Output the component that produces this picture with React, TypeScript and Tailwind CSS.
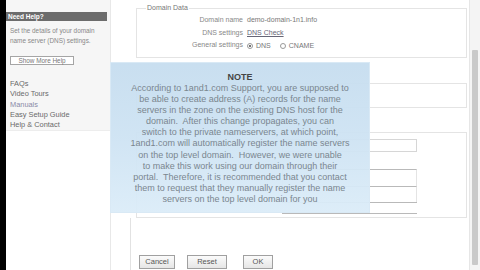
import React from 'react'

const noteLines = [
  'According to 1and1.com Support, you are supposed to',
  'be able to create address (A) records for the name',
  'servers in the zone on the existing DNS host for the',
  'domain.  After this change propagates, you can',
  'switch to the private nameservers, at which point,',
  '1and1.com will automatically register the name servers',
  'on the top level domain.  However, we were unable',
  'to make this work using our domain through their',
  'portal.  Therefore, it is recommended that you contact',
  'them to request that they manually register the name',
  'servers on the top level domain for you',
]

const helpLinks = ['FAQs', 'Video Tours', 'Manuals', 'Easy Setup Guide', 'Help & Contact']

const Box: React.FC<{ legend?: string; className?: string; children?: React.ReactNode }> = ({
  legend,
  className = '',
  children,
}) => (
  <div className={`relative ml-[25px] mr-[2px] border border-[#e4e4e4] ${className}`}>
    {legend && (
      <span className="absolute -top-[6px] left-[9px] bg-white px-[1px] text-[7px] leading-[10px] text-[#777]">
        {legend}
      </span>
    )}
    {children}
  </div>
)

const Row: React.FC<{ label: string; children: React.ReactNode }> = ({ label, children }) => (
  <div className="flex items-center h-[12.5px]">
    <span className="w-[109px] pr-[3px] text-right text-[7px] text-[#888]">{label}</span>
    <span className="pl-[1px] text-[7px] text-[#777]">{children}</span>
  </div>
)

const Radio: React.FC<{ checked?: boolean; label: string }> = ({ checked, label }) => (
  <span className="inline-flex items-center gap-[3px] mr-[9px]">
    <span className="w-[6px] h-[6px] rounded-full border border-[#999] bg-white flex items-center justify-center">
      {checked && <span className="w-[2px] h-[2px] rounded-full bg-[#444]" />}
    </span>
    {label}
  </span>
)

const Btn: React.FC<{ label: string; w: string }> = ({ label, w }) => (
  <button
    className={`${w} h-[14px] border border-[#a0a0a0] bg-gradient-to-b from-[#fbfbfb] to-[#e6e6e6] text-[7.5px] text-[#555]`}
  >
    {label}
  </button>
)

export default function App() {
  return (
    <div className="relative w-[480px] h-[270px] overflow-hidden bg-white flex font-['Liberation_Sans',Arial,sans-serif]">
      {/* left edge */}
      <div className="w-[6px] shrink-0 bg-black" />

      {/* help sidebar */}
      <aside className="w-[104px] shrink-0 flex flex-col">
        <div className="bg-[#f6f6f6] pt-[12px] h-[131px] border-b border-[#ededed]">
          <div className="mr-[3px] h-[9px] bg-[#6c6c6c] pl-[2px] text-[6.5px] font-bold leading-[9px] text-white">
            Need Help?
          </div>
          <p className="mt-[5px] pl-[4px] text-[6.4px] leading-[10px] text-[#888]">
            Set the details of your domain
            <br />
            name server (DNS) settings.
          </p>
          <button className="ml-[4px] mt-[7px] w-[64px] h-[9px] border border-[#a5a5a5] bg-white text-[6.4px] leading-[7px] text-[#777]">
            Show More Help
          </button>
          <ul className="mt-[9px] pl-[4px]">
            {helpLinks.map(l => (
              <li
                key={l}
                className={`text-[7.4px] leading-[10.3px] ${l === 'Manuals' ? 'text-[#8a8aa6]' : 'text-[#6a6a6a]'}`}
              >
                {l}
              </li>
            ))}
          </ul>
        </div>
        <div className="flex-1 bg-white" />
      </aside>

      {/* main form */}
      <main className="flex-1 flex flex-col border-l border-[#e8e8e8] pt-[8px]">
        <Box legend="Domain Data" className="h-[50px] pt-[5px]">
          <Row label="Domain name">demo-domain-1n1.info</Row>
          <Row label="DNS settings">
            <span className="underline text-[#667]">DNS Check</span>
          </Row>
          <Row label="General settings">
            <span className="inline-flex items-center pt-[2px]">
              <Radio checked label="DNS" />
              <Radio label="CNAME" />
            </span>
          </Row>
        </Box>

        <Box className="mt-[25px] h-[25px]" />

        <Box className="mt-[24px] h-[86px] pt-[6px]">
          <div className="ml-[145px] w-[135px] flex flex-col">
            <div className="h-[13px] border border-[#d6d6d6]" />
            <div className="mt-[17px] h-[17px] border-t border-[#b9b9b9] border-x border-x-[#e4e4e4]" />
            <div className="h-[16px] border-t border-[#b9b9b9] border-x border-x-[#e4e4e4]" />
            <div className="h-[12px] border-y border-[#b9b9b9] border-x-0" />
          </div>
        </Box>

        <div className="ml-[19px] flex-1 border-l border-[#e2e2e2] pt-[37px] pl-[8px] flex items-start">
          <Btn label="Cancel" w="w-[36px]" />
          <span className="w-[12px]" />
          <Btn label="Reset" w="w-[40px]" />
          <span className="w-[16px]" />
          <Btn label="OK" w="w-[30px]" />
        </div>
      </main>

      {/* scrollbar */}
      <div className="w-[11px] shrink-0 flex flex-col bg-[#f4f4f4] border-l border-[#e6e6e6]">
        <div className="h-[50px]" />
        <div className="mx-[2px] flex-1 mb-[5px] bg-[#c9c9c9] rounded-[1px]" />
      </div>

      {/* note overlay */}
      <div className="absolute left-[110px] top-[62px] w-[260px] h-[151px] bg-gradient-to-b from-[#c6ddef]/95 via-[#cee3f3]/95 to-[#dbecf8]/95 border border-[#d9e9f5] pt-[8px] text-center">
        <div className="text-[9px] leading-[12px] font-bold text-[#454545]">NOTE</div>
        {noteLines.map(line => (
          <div key={line} className="whitespace-pre text-[9px] leading-[11.1px] text-[#7a868f]">
            {line}
          </div>
        ))}
      </div>
    </div>
  )
}
